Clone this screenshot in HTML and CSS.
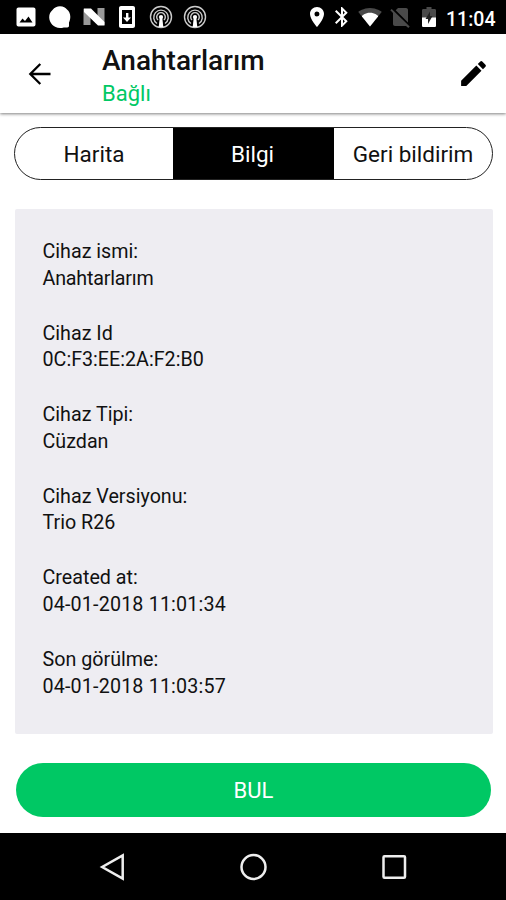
FILE: index.html
```html
<!DOCTYPE html>
<html lang="tr">
<head>
<meta charset="utf-8">
<title>Anahtarlarım</title>
<link rel="stylesheet" href="styles.css">
</head>
<body>
<div class="screen">
  <div class="status">
    <div class="notifications">
      <svg viewBox="0 0 24 24"><path d="M21.500 19.500v-15c0-1.100-.9-2-2-2h-15c-1.100 0-2 .9-2 2v15c0 1.100.9 2 2 2h15c1.100 0 2-.9 2-2zM5.500 17.500l3-4 2.500 2.500 3.500-4.500 4 6z"/></svg>
      <svg viewBox="0 0 24 24"><path d="M12 1.200c3.500 0 5.500 1.300 7 3.300 2 1.500 3.300 4 3.300 7.300 0 2.200-.5 4.200-1.300 5.700v3.300c0 1-.7 1.700-1.700 1.700h-3.500c-1.200.4-2.500.5-3.800.5C5.700 22.500 1.200 18 1.200 12.200 1.200 9 2.500 6.700 4.500 5 6.500 2.400 9 1.200 12 1.200z"/></svg>
      <svg viewBox="0 0 24 24"><path class="fade" d="M1.500 3.500l7 6V20h-7zM22.500 20l-7-6V3h7z"/><path d="M2 3.500h7L22.500 17v3.500H16L2 7z"/></svg>
      <svg viewBox="0 0 24 24"><path fill-rule="evenodd" d="M6 1h12c1.100 0 2 .9 2 2v18c0 1.100-.9 2-2 2H6c-1.100 0-2-.9-2-2V3c0-1.100.9-2 2-2zm1 4v14h10V5zm4 3h2.400v4.500H16L12 17l-4-4.500h3z"/></svg>
      <svg viewBox="0 0 24 24"><g class="rings"><circle cx="12" cy="12" r="10.500"/><path d="M8 18.500a7.300 7.300 0 1 1 8 0M9 15a4.300 4.300 0 1 1 6 0"/></g><circle cx="12" cy="12" r="2.100"/><path d="M10.700 13h2.600l1 9h-4.600z"/></svg>
      <svg viewBox="0 0 24 24"><g class="rings"><circle cx="12" cy="12" r="10.500"/><path d="M8 18.500a7.300 7.300 0 1 1 8 0M9 15a4.300 4.300 0 1 1 6 0"/></g><circle cx="12" cy="12" r="2.100"/><path d="M10.700 13h2.600l1 9h-4.600z"/></svg>
    </div>
    <div class="system">
      <svg class="pin" viewBox="0 0 24 24"><path d="M12 2C8.130 2 5 5.130 5 9c0 5.250 7 13 7 13s7-7.750 7-13c0-3.870-3.130-7-7-7zm0 9.500a2.500 2.500 0 1 1 0-5 2.500 2.500 0 0 1 0 5z"/></svg>
      <svg class="bluetooth" viewBox="0 0 24 24"><path d="M17.710 7.710L12 2h-1v7.590L6.410 5 5 6.410 10.590 12 5 17.590 6.410 19 11 14.410V22h1l5.710-5.710-4.300-4.290 4.300-4.290zM13 5.830l1.880 1.880L13 9.590V5.830zm1.880 10.460L13 18.170v-3.760l1.880 1.880z"/></svg>
      <svg class="wifi" viewBox="0 0 24 24"><path class="dim" d="M12 21.500L.3 6.900C.8 6.500 5.300 3 12 3s11.200 3.500 11.700 3.900z"/><path d="M12 21.500L4 11.500C3.500 10.500 7.400 7.700 12 7.700s8.500 2.800 8 3.800z"/></svg>
      <svg class="sim" viewBox="0 0 24 24"><path class="dim" d="M20 5c0-1.100-.9-2-2-2h-8L7.700 5.300 20 17.600zM3.700 3.900L2.300 5.300 5 8v11c0 1.100.9 2 2 2h11l2.300 2 1.400-1.400z"/></svg>
      <svg class="battery" viewBox="0 0 24 24"><path class="dim" d="M17.700 4H14.500V2h-5v2H6.300C5.600 4 5 4.600 5 5.300V13h14V5.300c0-.7-.6-1.300-1.300-1.300z"/><path d="M5 12.500v8.200c0 .7.600 1.300 1.300 1.300h11.400c.7 0 1.300-.6 1.300-1.300v-8.200z"/><path class="bolt" d="M13 6.500L8.500 14H11v5l4.500-8H13z"/></svg>
      <span class="clock">11:04</span>
    </div>
  </div>

  <header class="toolbar">
    <svg class="back" viewBox="0 0 24 24"><path d="M22.500 12H3M12.300 2L2.300 12l10 10"/></svg>
    <div class="heading">
      <h1>Anahtarlarım</h1>
      <p>Bağlı</p>
    </div>
    <svg class="edit" viewBox="0 0 24 24"><path d="M3 17.250V21h3.750L17.810 9.940l-3.750-3.750L3 17.250zM20.710 7.040a1 1 0 0 0 0-1.410l-2.340-2.340a1 1 0 0 0-1.410 0l-1.830 1.830 3.750 3.750 1.830-1.830z"/></svg>
  </header>

  <main>
    <nav class="tabs">
      <span class="tab">Harita</span>
      <span class="tab active">Bilgi</span>
      <span class="tab">Geri bildirim</span>
    </nav>
    <dl class="info">
      <div><dt>Cihaz ismi:</dt><dd class="name">Anahtarlarım</dd></div>
      <div><dt>Cihaz Id</dt><dd>0C:F3:EE:2A:F2:B0</dd></div>
      <div><dt>Cihaz Tipi:</dt><dd>Cüzdan</dd></div>
      <div><dt>Cihaz Versiyonu:</dt><dd>Trio R26</dd></div>
      <div><dt>Created at:</dt><dd class="date">04-01-2018 11:01:34</dd></div>
      <div><dt>Son görülme:</dt><dd class="date">04-01-2018 11:03:57</dd></div>
    </dl>
    <button class="find">BUL</button>
  </main>

  <footer class="navbar">
    <svg viewBox="0 0 28 28"><path d="M24.700 2.500v23L4.200 14z"/></svg>
    <svg viewBox="0 0 28 28"><circle cx="14.500" cy="14" r="12"/></svg>
    <svg viewBox="0 0 28 28"><rect x="3.500" y="3.300" width="21.500" height="21.500" rx="1"/></svg>
  </footer>
</div>
</body>
</html>
```

FILE: styles.css
```css
* { box-sizing: border-box; margin: 0; padding: 0; }

body {
  width: 506px;
  height: 900px;
  background: #fff;
  color: #111;
  font-family: Roboto, "Liberation Sans", sans-serif;
}

.screen { height: 900px; display: flex; flex-direction: column; overflow: hidden; }

.status {
  flex: none;
  height: 34px;
  padding: 0 10px 0 14px;
  background: #000;
  display: flex;
  align-items: center;
  justify-content: space-between;
}
.status svg { width: 24px; height: 24px; flex: none; fill: #fff; }
.notifications, .system { display: flex; align-items: center; }
.notifications { gap: 9.800px; }
.status .fade { fill: #999; }
.status .dim { fill: #4a4a4a; }
.status .bolt { fill: #222; }
.rings { fill: none; stroke: #ccc; stroke-width: 1.4; }
.pin { margin-right: 1px; }
.bluetooth { margin-right: 4px; }
.wifi { margin-right: 6px; }
.sim { margin-right: 5px; }
.battery { margin-right: 5px; }
.clock { color: #fff; font-size: 19.500px; font-weight: 500; line-height: 34px; width: 50px; padding-top: 3px; height: 34px; white-space: nowrap; }

.toolbar {
  flex: none;
  height: 79px;
  padding: 0 20px 0 28px;
  display: flex;
  align-items: center;
  background: #fff;
  box-shadow: 0 1px 3px rgba(0, 0, 0, .5);
}
.back { width: 24px; height: 24px; fill: none; stroke: #000; stroke-width: 2.300; }
.heading { flex: 1; margin-left: 50px; padding-top: 5px; }
h1 { font-size: 28px; line-height: 34px; font-weight: 500; color: #111; }
.heading p { font-size: 22px; line-height: 30px; margin-top: 1px; color: #00c864; }
.edit { width: 33px; height: 33px; margin-right: -4px; fill: #000; }

main { flex: 1; padding: 14px 14px 0 14px; }

.tabs {
  height: 53px;
  width: 479px;
  display: grid;
  grid-template-columns: 158px 161px 1fr;
  border: 1.400px solid #222;
  border-radius: 27px;
  overflow: hidden;
  font-size: 22.500px;
}
.tab { display: flex; align-items: center; justify-content: center; padding-top: 1px; }
.active { background: #000; color: #fff; padding-right: 2px; }

.info {
  width: 478px;
  height: 525px;
  margin-top: 29px;
  margin-left: .5px;
  padding: 30px 28px 0;
  background: #eeedf2;
  border-radius: 2px;
  font-size: 19.700px;
  line-height: 26.700px;
}
.info > div { height: 81.600px; }
.name { letter-spacing: -.2px; }
.date { letter-spacing: .17px; }

.find {
  display: block;
  width: 475px;
  height: 54px;
  margin: 29px 0 0 2px;
  padding-top: 1px;
  border: 0;
  border-radius: 27px;
  background: #00c864;
  color: #fff;
  font: 22px Roboto, "Liberation Sans", sans-serif;
}

.navbar {
  flex: none;
  height: 67px;
  padding: 0 98px;
  background: #000;
  display: flex;
  align-items: center;
  justify-content: space-between;
}
.navbar svg { width: 28px; height: 28px; fill: none; stroke: #eee; stroke-width: 2.500; }
```
